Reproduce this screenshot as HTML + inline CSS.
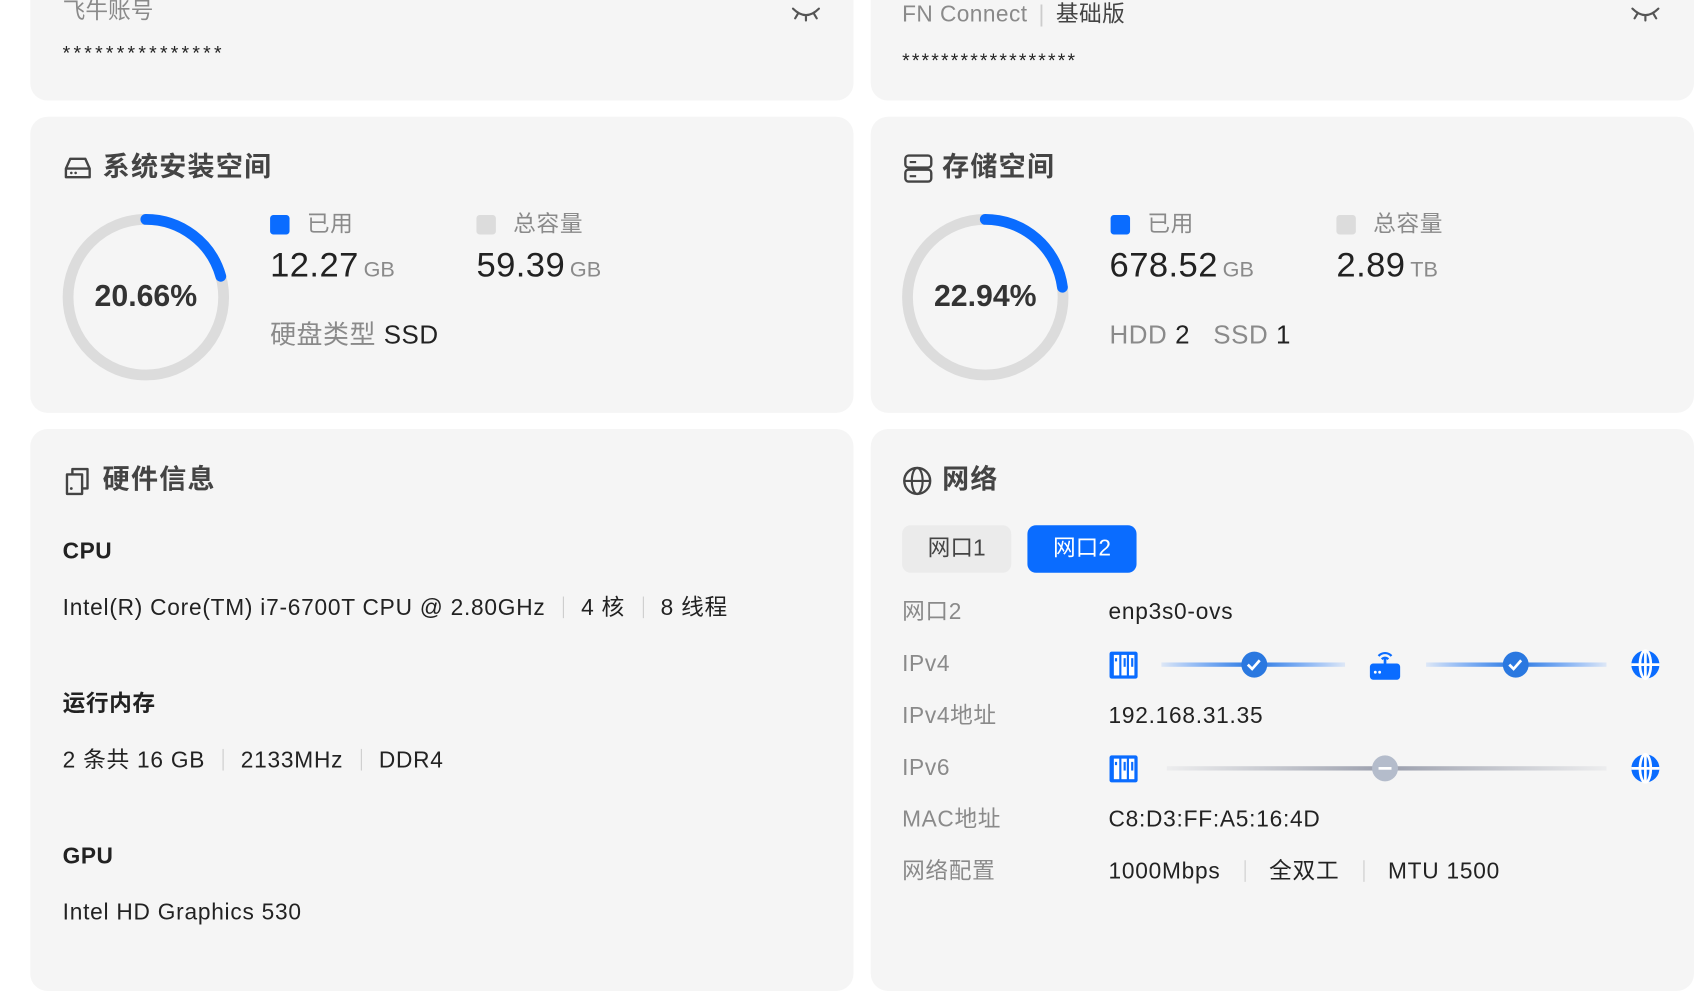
<!DOCTYPE html>
<html><head><meta charset="utf-8"><style>
*{margin:0;padding:0;box-sizing:border-box}
html,body{width:1694px;height:964px;overflow:hidden;background:#fff}
body{font-family:"Liberation Sans","Noto Sans CJK SC",sans-serif;color:#222}
#w{position:absolute;left:0;top:0;width:1568px;height:892px;transform:scale(1.08036,1.0807);transform-origin:0 0}
.card{position:absolute;background:#f5f5f5;border-radius:16px}
.a{position:absolute;white-space:nowrap;line-height:26px}
.g{color:#8a8a8a}
.t{font-size:25px;font-weight:bold;color:#444;letter-spacing:1.2px;line-height:30px}
.lab{font-size:21px;color:#8a8a8a;letter-spacing:.6px}
.big{font-size:32px;color:#222;letter-spacing:.4px}
.u{font-size:20px;color:#8a8a8a}
.sq{position:absolute;width:18px;height:18px;border-radius:3px}
.sep{display:inline-block;width:1px;height:20px;background:#ccc;margin:0 16px;vertical-align:-3px}
.h{font-size:21px;font-weight:bold;color:#222;letter-spacing:.5px}
.v{font-size:21px;color:#222;letter-spacing:.7px}
</style></head><body><div id="w">
<!-- row1 -->
<div class="card" style="left:28px;top:-20px;width:762px;height:113px"></div>
<div class="card" style="left:806px;top:-20px;width:762px;height:113px"></div>
<div class="a g" style="left:58px;top:-2px;font-size:21px">飞牛账号</div>
<div class="a" style="left:58px;top:36px;font-size:18px;letter-spacing:3px">***************</div>
<svg class="a" style="left:732px;top:4px" width="28" height="16" viewBox="0 0 28 16"><path d="M2 4 Q14 16 26 4 M14 10 v5 M7 8 l-3 5 M21 8 l3 5" stroke="#555" stroke-width="2" fill="none" stroke-linecap="round"/></svg>
<div class="a g" style="left:835px;top:1px;font-size:21px;letter-spacing:.4px">FN Connect <span style="color:#ccc;margin:0 4px">|</span> <span style="color:#444">基础版</span></div>
<div class="a" style="left:835px;top:43px;font-size:18px;letter-spacing:2px">******************</div>
<svg class="a" style="left:1509px;top:4px" width="28" height="16" viewBox="0 0 28 16"><path d="M2 4 Q14 16 26 4 M14 10 v5 M7 8 l-3 5 M21 8 l3 5" stroke="#555" stroke-width="2" fill="none" stroke-linecap="round"/></svg>

<!-- row2 -->
<div class="card" style="left:28px;top:108px;width:762px;height:274px"></div>
<div class="card" style="left:806px;top:108px;width:762px;height:274px"></div>
<svg class="a" style="left:58px;top:142px" width="28" height="26" viewBox="0 0 28 26"><path d="M3 14 L7 5 H21 L25 14 V22 H3 Z M3 14 H25" stroke="#444" stroke-width="2.2" fill="none" stroke-linejoin="round"/><circle cx="8" cy="18" r="1.2" fill="#444"/><circle cx="12" cy="18" r="1.2" fill="#444"/></svg>
<div class="a t" style="left:95px;top:140px">系统安装空间</div>
<svg class="a" style="left:57px;top:197px" width="156" height="156" viewBox="0 0 156 156"><circle cx="78" cy="78" r="72" stroke="#dcdcdc" stroke-width="10" fill="none"/><circle cx="78" cy="78" r="72" stroke="#0a6cff" stroke-width="10" fill="none" stroke-dasharray="93.5 1000" stroke-linecap="round" transform="rotate(-90 78 78)"/></svg>
<div class="a" style="left:57px;top:261px;width:156px;text-align:center;font-size:28px;font-weight:bold;color:#333">20.66%</div>
<div class="sq" style="left:250px;top:199px;background:#0a6cff"></div>
<div class="a lab" style="left:284px;top:195px">已用</div>
<div class="sq" style="left:441px;top:199px;background:#dcdcdc"></div>
<div class="a lab" style="left:475px;top:195px">总容量</div>
<div class="a" style="left:250px;top:232px"><span class="big">12.27</span> <span class="u">GB</span></div>
<div class="a" style="left:441px;top:232px"><span class="big">59.39</span> <span class="u">GB</span></div>
<div class="a" style="left:250px;top:298px;font-size:24px;letter-spacing:.5px"><span class="g">硬盘类型</span> SSD</div>

<svg class="a" style="left:836px;top:142px" width="28" height="28" viewBox="0 0 28 28"><rect x="2" y="2" width="24" height="11" rx="3" stroke="#444" stroke-width="2.2" fill="none"/><rect x="2" y="15" width="24" height="11" rx="3" stroke="#444" stroke-width="2.2" fill="none"/><path d="M6 8h6M6 21h6" stroke="#444" stroke-width="2"/></svg>
<div class="a t" style="left:872px;top:140px">存储空间</div>
<svg class="a" style="left:834px;top:197px" width="156" height="156" viewBox="0 0 156 156"><circle cx="78" cy="78" r="72" stroke="#dcdcdc" stroke-width="10" fill="none"/><circle cx="78" cy="78" r="72" stroke="#0a6cff" stroke-width="10" fill="none" stroke-dasharray="103.8 1000" stroke-linecap="round" transform="rotate(-90 78 78)"/></svg>
<div class="a" style="left:834px;top:261px;width:156px;text-align:center;font-size:28px;font-weight:bold;color:#333">22.94%</div>
<div class="sq" style="left:1028px;top:199px;background:#0a6cff"></div>
<div class="a lab" style="left:1062px;top:195px">已用</div>
<div class="sq" style="left:1237px;top:199px;background:#dcdcdc"></div>
<div class="a lab" style="left:1271px;top:195px">总容量</div>
<div class="a" style="left:1027px;top:232px"><span class="big">678.52</span> <span class="u">GB</span></div>
<div class="a" style="left:1237px;top:232px"><span class="big">2.89</span> <span class="u">TB</span></div>
<div class="a" style="left:1027px;top:298px;font-size:24px;letter-spacing:.5px"><span class="g">HDD</span> 2 &nbsp;&nbsp;<span class="g">SSD</span> 1</div>

<!-- row3 -->
<div class="card" style="left:28px;top:397px;width:762px;height:520px"></div>
<div class="card" style="left:806px;top:397px;width:762px;height:520px"></div>
<svg class="a" style="left:58px;top:430px" width="28" height="30" viewBox="0 0 28 30"><path d="M4 9 V27 H18 V9 Z M9 9 V4 H23 V22 H18" stroke="#444" stroke-width="2.2" fill="none" stroke-linejoin="round"/><circle cx="8" cy="22" r="1.3" fill="#444"/></svg>
<div class="a t" style="left:95px;top:429px">硬件信息</div>
<div class="a h" style="left:58px;top:498px">CPU</div>
<div class="a v" style="left:58px;top:550px">Intel(R) Core(TM) i7-6700T CPU @ 2.80GHz<span class="sep"></span>4 核<span class="sep"></span>8 线程</div>
<div class="a h" style="left:58px;top:639px">运行内存</div>
<div class="a v" style="left:58px;top:691px">2 条共 16 GB<span class="sep"></span>2133MHz<span class="sep"></span>DDR4</div>
<div class="a h" style="left:58px;top:780px">GPU</div>
<div class="a v" style="left:58px;top:832px">Intel HD Graphics 530</div>

<svg class="a" style="left:835px;top:431px" width="28" height="28" viewBox="0 0 28 28"><circle cx="14" cy="14" r="12" stroke="#444" stroke-width="2.2" fill="none"/><ellipse cx="14" cy="14" rx="5" ry="12" stroke="#444" stroke-width="2" fill="none"/><path d="M2 14h24" stroke="#444" stroke-width="2"/></svg>
<div class="a t" style="left:872px;top:429px">网络</div>
<div class="a" style="left:835px;top:486px;width:101px;height:44px;background:#ebebeb;border-radius:8px;text-align:center;line-height:44px;font-size:21px;color:#444">网口1</div>
<div class="a" style="left:951px;top:486px;width:101px;height:44px;background:#0a6cff;border-radius:8px;text-align:center;line-height:44px;font-size:21px;color:#fff">网口2</div>
<div class="a lab" style="left:835px;top:554px">网口2</div><div class="a v" style="left:1026px;top:554px">enp3s0-ovs</div>
<div class="a lab" style="left:835px;top:602px">IPv4</div>
<div class="a lab" style="left:835px;top:650px">IPv4地址</div><div class="a v" style="left:1026px;top:650px">192.168.31.35</div>
<div class="a lab" style="left:835px;top:698px">IPv6</div>
<div class="a lab" style="left:835px;top:746px">MAC地址</div><div class="a v" style="left:1026px;top:746px">C8:D3:FF:A5:16:4D</div>
<div class="a lab" style="left:835px;top:794px">网络配置</div><div class="a v" style="left:1026px;top:794px">1000Mbps<span class="sep" style="margin:0 22px"></span>全双工<span class="sep" style="margin:0 22px"></span>MTU 1500</div>

<svg class="a" style="left:1020px;top:595px" width="530" height="130" viewBox="1020 595 530 130">
<defs>
<linearGradient id="b1" x1="0" x2="1"><stop offset="0" stop-color="#0a6cff" stop-opacity=".1"/><stop offset=".5" stop-color="#2a78e0"/><stop offset="1" stop-color="#0a6cff" stop-opacity=".1"/></linearGradient>
<linearGradient id="g1" x1="0" x2="1"><stop offset="0" stop-color="#a0a4b0" stop-opacity=".1"/><stop offset=".5" stop-color="#9a9eac"/><stop offset="1" stop-color="#a0a4b0" stop-opacity=".1"/></linearGradient>
<g id="srv"><rect x="1027" y="603" width="26" height="25" rx="2" fill="#0a6cff"/><rect x="1031" y="606" width="5" height="19" fill="#fff"/><rect x="1038" y="606" width="5" height="19" fill="#fff"/><rect x="1045" y="606" width="5" height="19" fill="#fff"/><rect x="1032" y="609" width="2" height="3" fill="#0a6cff"/><rect x="1040" y="609" width="2" height="8" fill="#0a6cff"/><rect x="1047" y="609" width="2" height="8" fill="#0a6cff"/></g>
<g id="glb"><circle cx="1523" cy="615" r="13" fill="#0a6cff"/><ellipse cx="1523" cy="615" rx="5" ry="13" fill="none" stroke="#fff" stroke-width="2.5"/><path d="M1510 615h26" stroke="#fff" stroke-width="2.5"/><path d="M1523 602v26" stroke="#fff" stroke-width="2.5"/></g>
</defs>
<rect x="1075" y="613" width="170" height="4" fill="url(#b1)"/>
<rect x="1320" y="613" width="167" height="4" fill="url(#b1)"/>
<circle cx="1161" cy="615" r="12" fill="#2a78e0"/><path d="M1155 615l4 4 7-8" stroke="#fff" stroke-width="2.5" fill="none"/>
<circle cx="1403" cy="615" r="12" fill="#2a78e0"/><path d="M1397 615l4 4 7-8" stroke="#fff" stroke-width="2.5" fill="none"/>
<rect x="1268" y="614" width="28" height="15" rx="3" fill="#0a6cff"/><path d="M1282 614v-6" stroke="#0a6cff" stroke-width="2.5"/><path d="M1276 607a8 8 0 0 1 12 0M1279 610a4 4 0 0 1 6 0" stroke="#0a6cff" stroke-width="2" fill="none"/><circle cx="1273" cy="622" r="1.3" fill="#fff"/><circle cx="1277" cy="622" r="1.3" fill="#fff"/>
<use href="#glb"/><use href="#srv"/>
<rect x="1080" y="709" width="407" height="4" fill="url(#g1)"/>
<circle cx="1282" cy="711" r="12" fill="#b4bccb"/><path d="M1276 711h12" stroke="#fff" stroke-width="2.5"/>
<use href="#srv" y="96"/><use href="#glb" y="96"/>
</svg>
</div></body></html>
